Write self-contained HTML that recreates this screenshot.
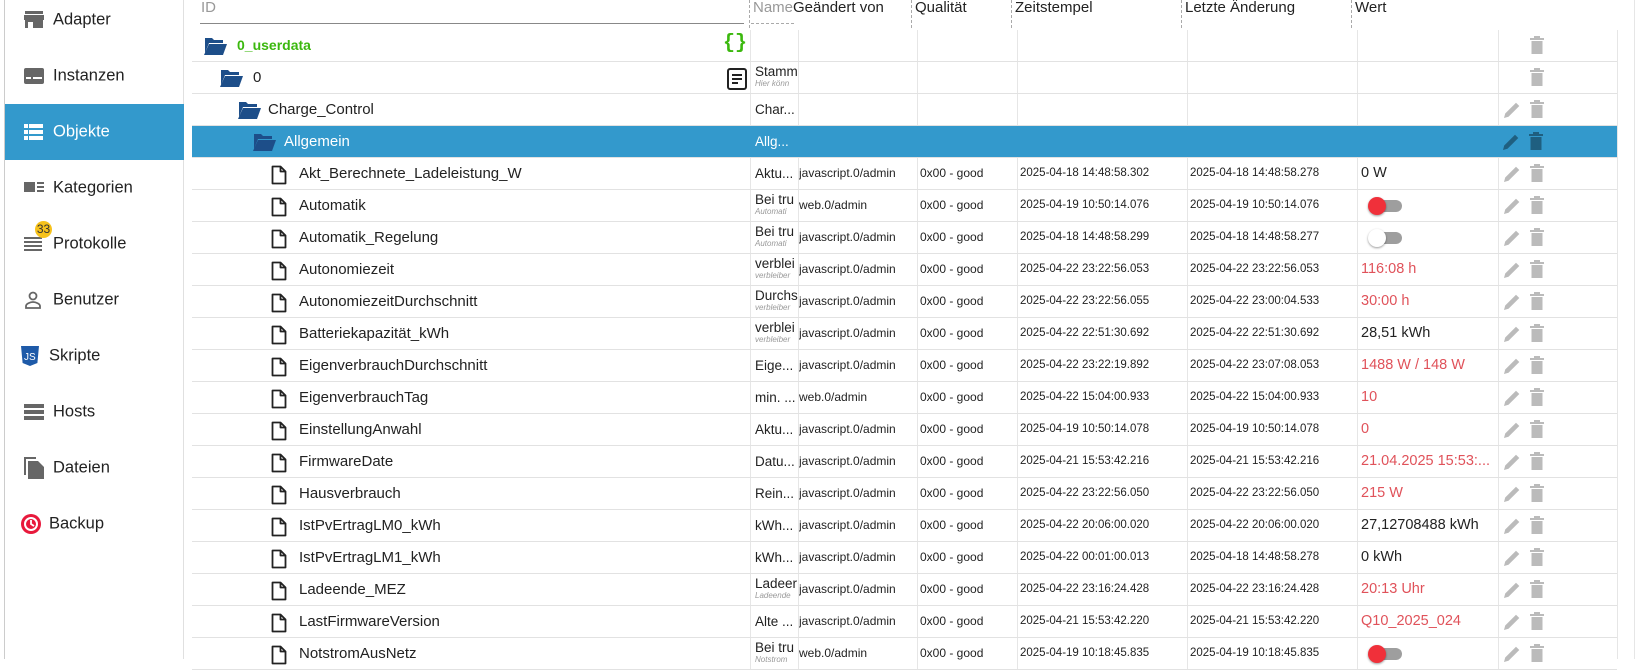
<!DOCTYPE html>
<html><head><meta charset="utf-8"><style>
*{margin:0;padding:0;box-sizing:border-box}
body{width:1644px;height:659px;overflow:hidden;background:#fff;font-family:"Liberation Sans",sans-serif;color:#222;position:relative}
.sb{position:absolute;left:4px;top:0;width:180px;height:659px;border-left:1px solid #ccc;border-right:1px solid #e0e0e0}
.it{position:absolute;left:0;width:179px;height:56px;font-size:16.5px;color:#222}
.it span{position:absolute;left:48px;top:50%;transform:translateY(-50%)}
.it svg{position:absolute;left:19px;top:50%;transform:translateY(-50%)}
.sel{background:#3399cc;color:#fff}
.hd{position:absolute;top:0;font-size:15px;color:#222;height:28px;line-height:16px;padding-top:0}
.dl{border-left:1px dashed #aaa;padding-left:3px}
.row{position:absolute;left:192px;width:1425px;height:32px;border-bottom:1px solid #e2e2e2}
.row.s{background:#3399cc;color:#fff}
.c{position:absolute;top:0;height:31px;font-size:15px;line-height:31px;white-space:nowrap;overflow:hidden}
.n{left:558px;width:48px;border-left:1px solid #e6e6e6;font-size:13.5px;padding-left:4px}
.n2{line-height:15px;padding-top:2px}
.n2 i{display:block;font-size:8px;color:#999;line-height:10px}
.g{left:606px;width:119px;border-left:1px solid #e6e6e6;font-size:12px}
.q{left:725px;width:100px;border-left:1px solid #e6e6e6;font-size:12px;padding-left:2px}
.t{left:825px;width:170px;border-left:1px solid #e6e6e6;font-size:11.5px;padding-left:2px}
.l{left:995px;width:170px;border-left:1px solid #e6e6e6;font-size:11.5px;padding-left:2px}
.w{left:1165px;width:141px;border-left:1px solid #e6e6e6;font-size:14.5px;padding-left:3px}
.a{left:1306px;width:119px;border-left:1px solid #e6e6e6}
.r{color:#e0525a}
.fi{position:absolute;left:79px;top:7px}
.nm{position:absolute;left:107px;top:0;line-height:31px;font-size:15px}
.pe{position:absolute;left:3px;top:6px}
.tr{position:absolute;left:31px;top:6px}
.tg{position:absolute;left:12px;top:10px;width:32px;height:12px;border-radius:6px;background:#9e9e9e}
.tg b{position:absolute;left:-2px;top:-3px;width:18px;height:18px;border-radius:50%;background:#f0303a;box-shadow:0 1px 2px rgba(0,0,0,.4)}
.tg.off b{background:#fff}
</style></head><body>
<div class="sb">
<div class="it" style="top:-8px"><svg width="20" height="18" viewBox="0 0 20 18"><rect x="1" y="0" width="18" height="3" fill="#666"/><rect x="0" y="4" width="20" height="5" fill="#666"/><rect x="1" y="9" width="18" height="8" fill="#666"/><rect x="4" y="11" width="5" height="6" fill="#fff"/></svg><span>Adapter</span></div>
<div class="it" style="top:48px"><svg width="20" height="16" viewBox="0 0 20 16"><rect width="20" height="16" rx="2" fill="#666"/><rect x="2" y="9" width="5" height="2" fill="#fff"/><rect x="9" y="9" width="9" height="2" fill="#fff"/></svg><span>Instanzen</span></div>
<div class="it sel" style="top:104px"><svg width="19" height="16" viewBox="0 0 19 16"><g fill="#fff"><rect width="4" height="4"/><rect x="5" width="14" height="4"/><rect y="6" width="4" height="4"/><rect x="5" y="6" width="14" height="4"/><rect y="12" width="4" height="4"/><rect x="5" y="12" width="14" height="4"/></g></svg><span>Objekte</span></div>
<div class="it" style="top:160px"><svg width="20" height="12" viewBox="0 0 20 12"><rect width="11" height="10" fill="#666"/><g fill="#666"><rect x="13" y="0" width="7" height="2"/><rect x="13" y="4" width="7" height="2"/><rect x="13" y="8" width="7" height="2"/></g></svg><span>Kategorien</span></div>
<div class="it" style="top:216px"><svg width="18" height="14" viewBox="0 0 18 14"><g fill="#666"><rect width="18" height="2"/><rect y="4" width="18" height="2"/><rect y="8" width="18" height="2"/><rect y="12" width="18" height="2"/></g></svg><span>Protokolle</span></div>
<div style="position:absolute;left:30px;top:221px;width:17px;height:17px;border-radius:50%;background:#f7c21b;font-size:12px;line-height:17px;text-align:center;color:#333">33</div>
<div class="it" style="top:272px"><svg width="18" height="18" viewBox="0 0 18 18"><circle cx="9" cy="5" r="3.5" fill="none" stroke="#666" stroke-width="1.8"/><path d="M2 17v-2c0-2 4-4 7-4s7 2 7 4v2z" fill="none" stroke="#666" stroke-width="1.8"/></svg><span>Benutzer</span></div>
<div class="it" style="top:328px"><svg width="18" height="20" viewBox="0 0 18 20" style="left:16px"><path d="M0 0h18l-1.6 17L9 20 1.6 17z" fill="#1e5aa8"/><text x="3" y="14" font-size="10" fill="#fff" font-family="Liberation Sans">JS</text></svg><span style="left:44px">Skripte</span></div>
<div class="it" style="top:384px"><svg width="20" height="16" viewBox="0 0 20 16"><g fill="#666"><rect width="20" height="4"/><rect y="6" width="20" height="4"/><rect y="12" width="20" height="4"/></g></svg><span>Hosts</span></div>
<div class="it" style="top:440px"><svg width="20" height="22" viewBox="0 0 20 22"><path d="M0 0h12v2H2v16H0z" fill="#666"/><path d="M4 4h10l6 6v12H4z" fill="#666"/></svg><span>Dateien</span></div>
<div class="it" style="top:496px"><svg width="20" height="20" viewBox="0 0 20 20" style="left:16px"><circle cx="10" cy="10" r="10" fill="#e8193c"/><circle cx="10" cy="10" r="6" fill="none" stroke="#fff" stroke-width="2"/><path d="M10 6v4l3 2" stroke="#fff" stroke-width="1.8" fill="none"/></svg><span style="left:44px">Backup</span></div>
</div>

<div class="hd" style="left:201px;top:0;color:#999;font-size:15px">ID</div>
<div style="position:absolute;left:200px;top:23px;width:544px;border-bottom:1px solid #888"></div>
<div class="hd dl" style="left:749px;color:#999">Name</div>
<div style="position:absolute;left:751px;top:23px;width:43px;border-bottom:1px dashed #aaa"></div>
<div class="hd" style="left:793px">Geändert von</div>
<div class="hd dl" style="left:911px">Qualität</div>
<div class="hd dl" style="left:1011px">Zeitstempel</div>
<div class="hd dl" style="left:1181px">Letzte Änderung</div>
<div class="hd dl" style="left:1351px">Wert</div>
<div style="position:absolute;left:1617px;top:30px;height:629px;border-left:1px solid #e6e6e6"></div>
<div style="position:absolute;left:1634px;top:0;height:659px;border-left:1px solid #e6e6e6"></div>

<svg width="0" height="0" style="position:absolute"><defs>
<symbol id="fo" viewBox="0 0 24 20"><path d="M2 2h7l2 2h9v3H6L2 17z" fill="#1d4e89"/><path d="M6 8h18l-4 11H1z" fill="#1d4e89"/></symbol>
<symbol id="fl" viewBox="0 0 16 20"><path d="M1.5 1.5h8l5 5v12h-13z M9.5 1.5v5h5" fill="none" stroke="#222" stroke-width="1.8" stroke-linejoin="round"/></symbol>
<symbol id="pe" viewBox="0 0 20 20"><path d="M2 18l1.2-4.5L14 2.7l3.3 3.3L6.5 16.8z" fill="currentColor"/></symbol>
<symbol id="tr" viewBox="0 0 14 18"><path d="M0 2h14v2H0z M4 0h6v2H4z M1.5 5h11v13h-11z" fill="currentColor"/></symbol>
</defs></svg>

<div class="row" style="top:30px"><svg style="position:absolute;left:11px;top:6px" width="24" height="20"><use href="#fo"/></svg><div class="nm" style="left:45px;color:#3bb80e;font-weight:bold;font-size:14px">0_userdata</div><div style="position:absolute;left:531px;top:2px;color:#3bb80e;font-weight:bold;font-size:20px;font-family:'Liberation Mono',monospace">{}</div><div class="c n"></div><div class="c g"></div><div class="c q"></div><div class="c t"></div><div class="c l"></div><div class="c w"></div><div class="c a" style="color:#bbb"><svg class="tr" width="14" height="18"><use href="#tr"/></svg></div></div>

<div class="row" style="top:62px"><svg style="position:absolute;left:27px;top:6px" width="24" height="20"><use href="#fo"/></svg><div class="nm" style="left:61px">0</div><svg style="position:absolute;left:535px;top:6px" width="20" height="22" viewBox="0 0 20 22"><rect x="1" y="1" width="18" height="20" rx="2" fill="none" stroke="#222" stroke-width="2"/><path d="M5 7h10M5 11h10M5 15h6" stroke="#222" stroke-width="2"/></svg><div class="c n n2">Stamm<i>Hier könn</i></div><div class="c g"></div><div class="c q"></div><div class="c t"></div><div class="c l"></div><div class="c w"></div><div class="c a" style="color:#bbb"><svg class="tr" width="14" height="18"><use href="#tr"/></svg></div></div>

<div class="row" style="top:94px"><svg style="position:absolute;left:45px;top:6px" width="24" height="20"><use href="#fo"/></svg><div class="nm" style="left:76px">Charge_Control</div><div class="c n">Char...</div><div class="c g"></div><div class="c q"></div><div class="c t"></div><div class="c l"></div><div class="c w"></div><div class="c a" style="color:#bbb"><svg class="pe" width="20" height="20"><use href="#pe"/></svg><svg class="tr" width="14" height="18"><use href="#tr"/></svg></div></div>

<div class="row s" style="top:126px"><svg style="position:absolute;left:60px;top:6px" width="24" height="20"><use href="#fo"/></svg><div class="nm" style="left:92px">Allgemein</div><div class="c n" style="border-color:#3399cc">Allg...</div><div class="c g" style="border:0"></div><div class="c a" style="color:#1f5f80;border:0"><svg class="pe" width="20" height="20"><use href="#pe"/></svg><svg class="tr" width="14" height="18"><use href="#tr"/></svg></div></div>

<div class="row" style="top:158px"><svg class="fi" width="16" height="20"><use href="#fl"/></svg><div class="nm">Akt_Berechnete_Ladeleistung_W</div><div class="c n">Aktu...</div><div class="c g">javascript.0/admin</div><div class="c q">0x00 - good</div><div class="c t">2025-04-18 14:48:58.302</div><div class="c l">2025-04-18 14:48:58.278</div><div class="c w">0 W</div><div class="c a" style="color:#bbb"><svg class="pe" width="20" height="20"><use href="#pe"/></svg><svg class="tr" width="14" height="18"><use href="#tr"/></svg></div></div>

<div class="row" style="top:190px"><svg class="fi" width="16" height="20"><use href="#fl"/></svg><div class="nm">Automatik</div><div class="c n n2">Bei tru<i>Automati</i></div><div class="c g">web.0/admin</div><div class="c q">0x00 - good</div><div class="c t">2025-04-19 10:50:14.076</div><div class="c l">2025-04-19 10:50:14.076</div><div class="c w"><div class="tg"><b></b></div></div><div class="c a" style="color:#bbb"><svg class="pe" width="20" height="20"><use href="#pe"/></svg><svg class="tr" width="14" height="18"><use href="#tr"/></svg></div></div>

<div class="row" style="top:222px"><svg class="fi" width="16" height="20"><use href="#fl"/></svg><div class="nm">Automatik_Regelung</div><div class="c n n2">Bei tru<i>Automati</i></div><div class="c g">javascript.0/admin</div><div class="c q">0x00 - good</div><div class="c t">2025-04-18 14:48:58.299</div><div class="c l">2025-04-18 14:48:58.277</div><div class="c w"><div class="tg off"><b></b></div></div><div class="c a" style="color:#bbb"><svg class="pe" width="20" height="20"><use href="#pe"/></svg><svg class="tr" width="14" height="18"><use href="#tr"/></svg></div></div>

<div class="row" style="top:254px"><svg class="fi" width="16" height="20"><use href="#fl"/></svg><div class="nm">Autonomiezeit</div><div class="c n n2">verblei<i>verbleiber</i></div><div class="c g">javascript.0/admin</div><div class="c q">0x00 - good</div><div class="c t">2025-04-22 23:22:56.053</div><div class="c l">2025-04-22 23:22:56.053</div><div class="c w r">116:08 h</div><div class="c a" style="color:#bbb"><svg class="pe" width="20" height="20"><use href="#pe"/></svg><svg class="tr" width="14" height="18"><use href="#tr"/></svg></div></div>

<div class="row" style="top:286px"><svg class="fi" width="16" height="20"><use href="#fl"/></svg><div class="nm">AutonomiezeitDurchschnitt</div><div class="c n n2">Durchs<i>verbleiber</i></div><div class="c g">javascript.0/admin</div><div class="c q">0x00 - good</div><div class="c t">2025-04-22 23:22:56.055</div><div class="c l">2025-04-22 23:00:04.533</div><div class="c w r">30:00 h</div><div class="c a" style="color:#bbb"><svg class="pe" width="20" height="20"><use href="#pe"/></svg><svg class="tr" width="14" height="18"><use href="#tr"/></svg></div></div>

<div class="row" style="top:318px"><svg class="fi" width="16" height="20"><use href="#fl"/></svg><div class="nm">Batteriekapazität_kWh</div><div class="c n n2">verblei<i>verbleiber</i></div><div class="c g">javascript.0/admin</div><div class="c q">0x00 - good</div><div class="c t">2025-04-22 22:51:30.692</div><div class="c l">2025-04-22 22:51:30.692</div><div class="c w">28,51 kWh</div><div class="c a" style="color:#bbb"><svg class="pe" width="20" height="20"><use href="#pe"/></svg><svg class="tr" width="14" height="18"><use href="#tr"/></svg></div></div>

<div class="row" style="top:350px"><svg class="fi" width="16" height="20"><use href="#fl"/></svg><div class="nm">EigenverbrauchDurchschnitt</div><div class="c n">Eige...</div><div class="c g">javascript.0/admin</div><div class="c q">0x00 - good</div><div class="c t">2025-04-22 23:22:19.892</div><div class="c l">2025-04-22 23:07:08.053</div><div class="c w r">1488 W / 148 W</div><div class="c a" style="color:#bbb"><svg class="pe" width="20" height="20"><use href="#pe"/></svg><svg class="tr" width="14" height="18"><use href="#tr"/></svg></div></div>

<div class="row" style="top:382px"><svg class="fi" width="16" height="20"><use href="#fl"/></svg><div class="nm">EigenverbrauchTag</div><div class="c n">min. ...</div><div class="c g">web.0/admin</div><div class="c q">0x00 - good</div><div class="c t">2025-04-22 15:04:00.933</div><div class="c l">2025-04-22 15:04:00.933</div><div class="c w r">10</div><div class="c a" style="color:#bbb"><svg class="pe" width="20" height="20"><use href="#pe"/></svg><svg class="tr" width="14" height="18"><use href="#tr"/></svg></div></div>

<div class="row" style="top:414px"><svg class="fi" width="16" height="20"><use href="#fl"/></svg><div class="nm">EinstellungAnwahl</div><div class="c n">Aktu...</div><div class="c g">javascript.0/admin</div><div class="c q">0x00 - good</div><div class="c t">2025-04-19 10:50:14.078</div><div class="c l">2025-04-19 10:50:14.078</div><div class="c w r">0</div><div class="c a" style="color:#bbb"><svg class="pe" width="20" height="20"><use href="#pe"/></svg><svg class="tr" width="14" height="18"><use href="#tr"/></svg></div></div>

<div class="row" style="top:446px"><svg class="fi" width="16" height="20"><use href="#fl"/></svg><div class="nm">FirmwareDate</div><div class="c n">Datu...</div><div class="c g">javascript.0/admin</div><div class="c q">0x00 - good</div><div class="c t">2025-04-21 15:53:42.216</div><div class="c l">2025-04-21 15:53:42.216</div><div class="c w r">21.04.2025 15:53:...</div><div class="c a" style="color:#bbb"><svg class="pe" width="20" height="20"><use href="#pe"/></svg><svg class="tr" width="14" height="18"><use href="#tr"/></svg></div></div>

<div class="row" style="top:478px"><svg class="fi" width="16" height="20"><use href="#fl"/></svg><div class="nm">Hausverbrauch</div><div class="c n">Rein...</div><div class="c g">javascript.0/admin</div><div class="c q">0x00 - good</div><div class="c t">2025-04-22 23:22:56.050</div><div class="c l">2025-04-22 23:22:56.050</div><div class="c w r">215 W</div><div class="c a" style="color:#bbb"><svg class="pe" width="20" height="20"><use href="#pe"/></svg><svg class="tr" width="14" height="18"><use href="#tr"/></svg></div></div>

<div class="row" style="top:510px"><svg class="fi" width="16" height="20"><use href="#fl"/></svg><div class="nm">IstPvErtragLM0_kWh</div><div class="c n">kWh...</div><div class="c g">javascript.0/admin</div><div class="c q">0x00 - good</div><div class="c t">2025-04-22 20:06:00.020</div><div class="c l">2025-04-22 20:06:00.020</div><div class="c w">27,12708488 kWh</div><div class="c a" style="color:#bbb"><svg class="pe" width="20" height="20"><use href="#pe"/></svg><svg class="tr" width="14" height="18"><use href="#tr"/></svg></div></div>

<div class="row" style="top:542px"><svg class="fi" width="16" height="20"><use href="#fl"/></svg><div class="nm">IstPvErtragLM1_kWh</div><div class="c n">kWh...</div><div class="c g">javascript.0/admin</div><div class="c q">0x00 - good</div><div class="c t">2025-04-22 00:01:00.013</div><div class="c l">2025-04-18 14:48:58.278</div><div class="c w">0 kWh</div><div class="c a" style="color:#bbb"><svg class="pe" width="20" height="20"><use href="#pe"/></svg><svg class="tr" width="14" height="18"><use href="#tr"/></svg></div></div>

<div class="row" style="top:574px"><svg class="fi" width="16" height="20"><use href="#fl"/></svg><div class="nm">Ladeende_MEZ</div><div class="c n n2">Ladeer<i>Ladeende</i></div><div class="c g">javascript.0/admin</div><div class="c q">0x00 - good</div><div class="c t">2025-04-22 23:16:24.428</div><div class="c l">2025-04-22 23:16:24.428</div><div class="c w r">20:13 Uhr</div><div class="c a" style="color:#bbb"><svg class="pe" width="20" height="20"><use href="#pe"/></svg><svg class="tr" width="14" height="18"><use href="#tr"/></svg></div></div>

<div class="row" style="top:606px"><svg class="fi" width="16" height="20"><use href="#fl"/></svg><div class="nm">LastFirmwareVersion</div><div class="c n">Alte ...</div><div class="c g">javascript.0/admin</div><div class="c q">0x00 - good</div><div class="c t">2025-04-21 15:53:42.220</div><div class="c l">2025-04-21 15:53:42.220</div><div class="c w r">Q10_2025_024</div><div class="c a" style="color:#bbb"><svg class="pe" width="20" height="20"><use href="#pe"/></svg><svg class="tr" width="14" height="18"><use href="#tr"/></svg></div></div>

<div class="row" style="top:638px"><svg class="fi" width="16" height="20"><use href="#fl"/></svg><div class="nm">NotstromAusNetz</div><div class="c n n2">Bei tru<i>Notstrom</i></div><div class="c g">web.0/admin</div><div class="c q">0x00 - good</div><div class="c t">2025-04-19 10:18:45.835</div><div class="c l">2025-04-19 10:18:45.835</div><div class="c w"><div class="tg"><b></b></div></div><div class="c a" style="color:#bbb"><svg class="pe" width="20" height="20"><use href="#pe"/></svg><svg class="tr" width="14" height="18"><use href="#tr"/></svg></div></div>
</body></html>
